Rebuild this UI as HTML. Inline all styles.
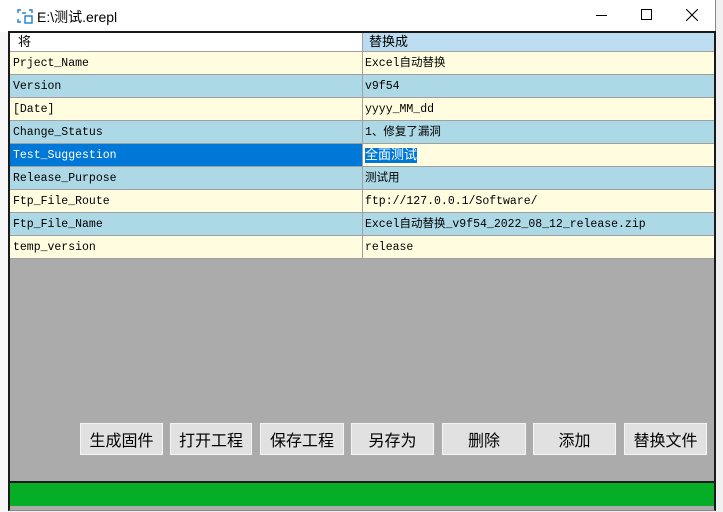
<!DOCTYPE html>
<html><head><meta charset="utf-8"><style>
*{margin:0;padding:0;box-sizing:border-box}
body{width:723px;height:512px;background:#f0f0f0;position:relative;overflow:hidden;font-family:"Liberation Sans","Noto Sans CJK SC",sans-serif}
.title{position:absolute;left:0;top:0;width:716px;height:32px;background:#fff;border-right:1px solid #888}
.title .t{position:absolute;left:37px;top:7px;font-size:14px;color:#000}
.win{position:absolute;left:8px;top:31px;width:708px;height:480px;background:#ababab;border:2px solid #1a1a1a;border-bottom:1px solid #888}
.row{position:absolute;left:0;width:704px;height:23px;border-bottom:1px solid #a0a0a0;font-family:"Liberation Mono","Noto Sans CJK SC",monospace;font-size:11.5px;line-height:23px}
.row .a{position:absolute;left:0;top:0;width:353px;height:22px;padding-left:3px;border-right:1px solid #a0a0a0}
.row .b{position:absolute;left:354px;top:0;padding-left:1px;white-space:nowrap}
.y{background:#fffce0}.bl{background:#add8e6}
.btn{position:absolute;top:390px;height:32px;background:#e1e1e1;border:1px solid #f4f4f4;outline:1px solid #adadad;font-size:16px;text-align:center;line-height:30px;font-family:"Noto Sans CJK SC",sans-serif}
.green{position:absolute;left:0;top:448px;width:704px;height:25px;background:#06ae27;border-top:2px solid #1a1a1a}
</style></head><body>
<div style="position:absolute;left:0;top:32px;width:8px;height:480px;background:#f7f7f7"></div>
<div class="title">
<svg style="position:absolute;left:17px;top:8px" width="16" height="16" viewBox="0 0 16 16" fill="none" stroke="#1a7fd4" stroke-width="1.4"><path d="M1 5V2h3M12 2h3v3M1 11v3h3"/><rect x="8" y="8" width="7" height="7"/><path d="M5 5h4"/></svg>
<span class="t">E:\测试.erepl</span>
<div style="position:absolute;left:596px;top:15px;width:11px;height:1px;background:#000"></div>
<div style="position:absolute;left:641px;top:9px;width:11px;height:11px;border:1px solid #000"></div>
<svg style="position:absolute;left:686px;top:9px" width="12" height="12"><path d="M0 0L12 12M12 0L0 12" stroke="#000" stroke-width="1.1"/></svg>
</div>
<div class="win">
<div style="position:absolute;left:0;top:0;width:704px;height:19px;background:#fff;border-bottom:1px solid #a0a0a0;font-size:13px;line-height:18px">
<span style="position:absolute;left:8px">将</span>
<div style="position:absolute;left:352px;top:0;width:352px;height:18px;background:#bcdcf2;border-left:1px solid #a0a0a0;padding-left:6px">替换成</div></div>
<div class="row y" style="top:19px"><div class="a">Prject_Name</div><div class="b">Excel自动替换</div></div>
<div class="row bl" style="top:42px"><div class="a">Version</div><div class="b">v9f54</div></div>
<div class="row y" style="top:65px"><div class="a">[Date]</div><div class="b">yyyy_MM_dd</div></div>
<div class="row bl" style="top:88px"><div class="a">Change_Status</div><div class="b">1、修复了漏洞</div></div>
<div class="row" style="top:111px;background:#fffce0"><div class="a" style="background:#0078d7;color:#fff">Test_Suggestion</div><div class="b"><span style="background:#0078d7;color:#fff;font-size:13px">全面测试</span></div></div>
<div class="row bl" style="top:134px"><div class="a">Release_Purpose</div><div class="b">测试用</div></div>
<div class="row y" style="top:157px"><div class="a">Ftp_File_Route</div><div class="b">ftp://127.0.0.1/Software/</div></div>
<div class="row bl" style="top:180px"><div class="a">Ftp_File_Name</div><div class="b">Excel自动替换_v9f54_2022_08_12_release.zip</div></div>
<div class="row y" style="top:203px"><div class="a">temp_version</div><div class="b">release</div></div>
<div class="btn" style="left:70px;width:83px">生成固件</div>
<div class="btn" style="left:160px;width:82px">打开工程</div>
<div class="btn" style="left:250px;width:84px">保存工程</div>
<div class="btn" style="left:341px;width:83px">另存为</div>
<div class="btn" style="left:432px;width:84px">删除</div>
<div class="btn" style="left:523px;width:83px">添加</div>
<div class="btn" style="left:614px;width:83px">替换文件</div>
<div class="green"></div>
</div>
</body></html>
